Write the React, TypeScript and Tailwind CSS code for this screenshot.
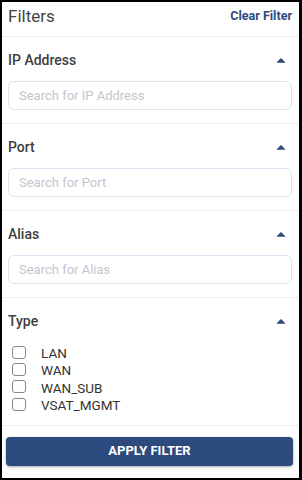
import { useState } from 'react';

const types = ['LAN', 'WAN', 'WAN_SUB', 'VSAT_MGMT'];

function Caret() {
  return (
    <svg width="10" height="5" viewBox="0 0 10 5" className="mr-[6px]">
      <path d="M0.3 4.7 L4.4 0.6 Q5 0 5.6 0.6 L9.7 4.7 Z" fill="#2c4a7e" />
    </svg>
  );
}

function SearchSection({ title, placeholder }: { title: string; placeholder: string }) {
  const [value, setValue] = useState('');
  return (
    <div className="border-b border-[#eceef2] px-[6px] pr-[7px] pt-[13px] pb-[13px]">
      <div className="flex items-center justify-between h-[20px]">
        <span className="text-[14px] font-medium text-[#404040]">{title}</span>
        <Caret />
      </div>
      <input
        value={value}
        onChange={(e) => setValue(e.target.value)}
        placeholder={placeholder}
        className="mt-[11px] w-full h-[29px] rounded-[6px] border border-[#d9e3f0] px-[10px] text-[13px] text-[#333] placeholder:text-[#c3c6cd] outline-none"
      />
    </div>
  );
}

export default function App() {
  const [checked, setChecked] = useState<string[]>([]);

  const toggle = (t: string) =>
    setChecked((prev) => (prev.includes(t) ? prev.filter((x) => x !== t) : [...prev, t]));

  return (
    <div className="w-[302px] h-[480px] bg-white border-l-2 border-t-2 border-b-2 border-r-[3px] border-black flex flex-col font-['Roboto',sans-serif]">
      {/* Header */}
      <div className="h-[35px] border-b border-[#eceef2] pt-[3px] px-[6px] pr-[7px] flex items-start justify-between">
        <span className="text-[17px] leading-[22px] text-[#444]">Filters</span>
        <button className="text-[12.5px] leading-[22px] font-bold text-[#2c4a7e]">Clear Filter</button>
      </div>

      <SearchSection title="IP Address" placeholder="Search for IP Address" />
      <SearchSection title="Port" placeholder="Search for Port" />
      <SearchSection title="Alias" placeholder="Search for Alias" />

      {/* Type */}
      <div className="border-b border-[#eceef2] px-[6px] pr-[7px] pt-[13px] pb-[12px]">
        <div className="flex items-center justify-between h-[20px]">
          <span className="text-[14px] font-medium text-[#404040]">Type</span>
          <Caret />
        </div>
        <div className="mt-[12.5px] flex flex-col">
          {types.map((t) => (
            <label key={t} className="h-[17.3px] flex items-center gap-[15px] pl-[4px] cursor-pointer">
              <span
                onClick={() => toggle(t)}
                className={`w-[14px] h-[13px] rounded-[3px] border ${
                  checked.includes(t) ? 'bg-[#2c4a7e] border-[#2c4a7e]' : 'border-[#8a8a8a] bg-white'
                }`}
              />
              <span className="text-[13.5px] leading-[17px] pt-[3px] text-[#333]">{t}</span>
            </label>
          ))}
        </div>
      </div>

      {/* Action */}
      <div className="pt-[11px] pl-[4px] pr-[6px]">
        <button className="w-full h-[29px] rounded-[4px] bg-[#2c4a7e] text-white text-[13px] font-bold shadow-[0_1px_3px_rgba(0,0,0,0.35)]">
          APPLY FILTER
        </button>
      </div>
    </div>
  );
}
